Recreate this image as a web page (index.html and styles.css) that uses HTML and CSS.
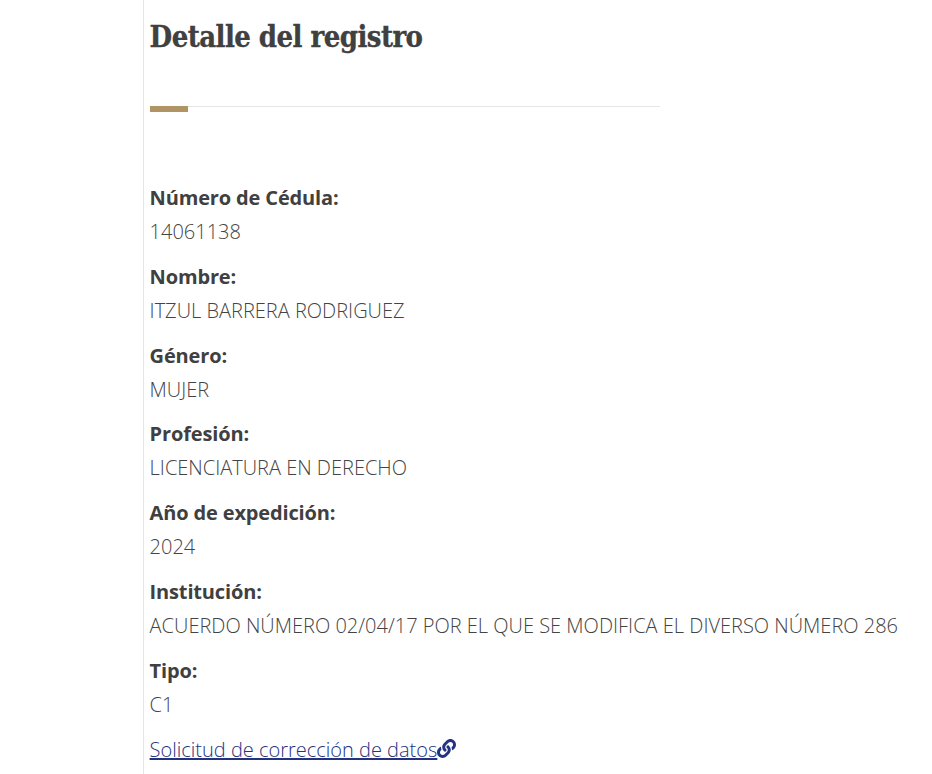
FILE: index.html
```html
<!DOCTYPE html>
<html lang="es">
<head>
<meta charset="utf-8">
<title>Detalle del registro</title>
<link rel="stylesheet" href="styles.css">
</head>
<body>
<main class="panel">
  <h1 class="title">Detalle del registro</h1>
  <div class="rule"><span class="rule-accent"></span></div>
  <dl class="fields">
    <dt>Número de Cédula:</dt><dd>14061138</dd>
    <dt>Nombre:</dt><dd>ITZUL BARRERA RODRIGUEZ</dd>
    <dt>Género:</dt><dd>MUJER</dd>
    <dt>Profesión:</dt><dd>LICENCIATURA EN DERECHO</dd>
    <dt>Año de expedición:</dt><dd>2024</dd>
    <dt>Institución:</dt><dd>ACUERDO NÚMERO 02/04/17 POR EL QUE SE MODIFICA EL DIVERSO NÚMERO 286</dd>
    <dt>Tipo:</dt><dd>C1</dd>
  </dl>
  <p class="link-row"><a class="link" href="#">Solicitud de corrección de datos</a><svg class="link-icon" viewBox="0 0 512 512" aria-hidden="true"><path fill="currentColor" d="M326.612 185.391c59.747 59.809 58.927 155.698.36 214.59-.11.12-.24.25-.36.37l-67.2 67.2c-59.27 59.27-155.699 59.262-214.96 0-59.27-59.26-59.27-155.7 0-214.96l37.106-37.106c9.84-9.84 26.786-3.3 27.294 10.606.648 17.722 3.826 35.527 9.69 52.721 1.986 5.822.567 12.262-3.783 16.612l-13.087 13.087c-28.026 28.026-28.905 73.66-1.155 101.96 28.024 28.579 74.086 28.749 102.325.51l67.2-67.19c28.191-28.191 28.073-73.757 0-101.83-3.701-3.694-7.429-6.564-10.341-8.569a16.037 16.037 0 0 1-6.947-12.606c-.396-10.567 3.348-21.456 11.698-29.806l21.054-21.055c5.521-5.521 14.182-6.199 20.584-1.731a152.482 152.482 0 0 1 20.522 17.197zM467.547 44.449c-59.261-59.262-155.69-59.27-214.96 0l-67.2 67.2c-.12.12-.25.25-.36.37-58.566 58.892-59.387 154.781.36 214.59a152.454 152.454 0 0 0 20.521 17.196c6.402 4.468 15.064 3.789 20.584-1.731l21.054-21.055c8.35-8.35 12.094-19.239 11.698-29.806a16.037 16.037 0 0 0-6.947-12.606c-2.912-2.005-6.64-4.875-10.341-8.569-28.073-28.073-28.191-73.639 0-101.83l67.2-67.19c28.239-28.239 74.3-28.069 102.325.51 27.75 28.3 26.872 73.934-1.155 101.96l-13.087 13.087c-4.35 4.35-5.769 10.79-3.783 16.612 5.864 17.194 9.042 34.999 9.69 52.721.509 13.906 17.454 20.446 27.294 10.606l37.106-37.106c59.271-59.259 59.271-155.699.001-214.959z"/></svg></p>
</main>
</body>
</html>
```

FILE: styles.css
```css
html, body { margin: 0; padding: 0; background: #fff; }
body { height: 774px; overflow: hidden; font-family: "Open Sans", sans-serif; color: #3d3d3d; }
.panel { margin-left: 143px; height: 774px; border-left: 1px solid #e6e6e6; padding-left: 5.6px; box-sizing: border-box; }
.title { margin: 0; padding-top: 16px; font: 700 29px/42px "DejaVu Serif Condensed", "DejaVu Serif", serif; letter-spacing: -0.55px; color: #404040; -webkit-text-stroke: 0.3px #404040; }
.rule { margin-top: 48px; width: 510px; height: 1px; background: #e6e6e6; position: relative; }
.rule-accent { position: absolute; left: 0; top: 0; width: 38.4px; height: 6px; background: #b09464; }
.fields { margin: 75px 0 0; }
.fields dt { font-size: 20px; font-weight: 700; line-height: 32.4px; padding-bottom: 0.6px; letter-spacing: -0.15px; color: #404040; }
.fields dd { margin: 0 0 12.33px; font-size: 20px; font-weight: 300; line-height: 33.5px; color: #444; }
.link-row { margin: -1px 0 0; display: flex; align-items: center; font-size: 20px; font-weight: 300; line-height: 34px; color: #24337f; }
.link { color: #24337f; text-decoration: underline; text-decoration-thickness: 2px; text-underline-offset: 1px; }
.link-icon { width: 19px; height: 19px; display: block; margin-top: -3px; }
```
